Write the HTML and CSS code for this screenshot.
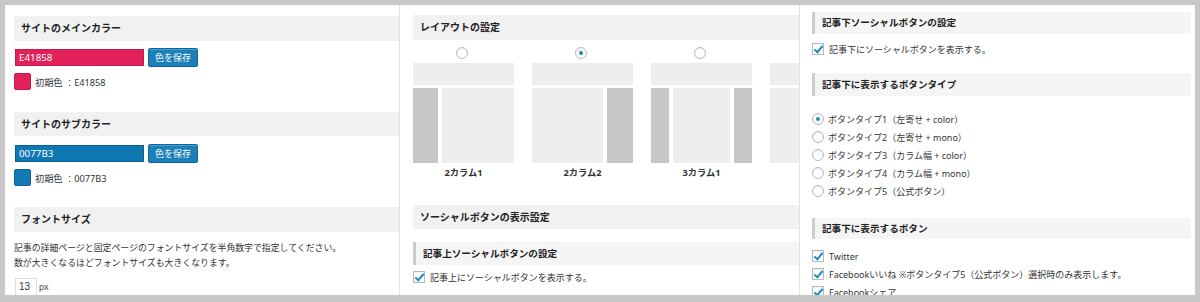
FILE: index.html
```html
<!DOCTYPE html>
<html lang="ja">
<head>
<meta charset="utf-8">
<title>設定</title>
<link rel="stylesheet" href="styles.css">
</head>
<body>
<div class="frame">
  <section class="panel p1">
    <h2 class="sec">サイトのメインカラー</h2>
    <div class="color-row">
      <div class="color-input pink">E41858</div>
      <button class="btn">色を保存</button>
    </div>
    <div class="default-row">
      <span class="swatch pink"></span>
      <span class="default-text">初期色 ：E41858</span>
    </div>

    <h2 class="sec sec-2">サイトのサブカラー</h2>
    <div class="color-row color-row-2">
      <div class="color-input blue">0077B3</div>
      <button class="btn">色を保存</button>
    </div>
    <div class="default-row">
      <span class="swatch blue"></span>
      <span class="default-text">初期色 ：0077B3</span>
    </div>

    <h2 class="sec sec-3">フォントサイズ</h2>
    <p class="desc">記事の詳細ページと固定ページのフォントサイズを半角数字で指定してください。<br>数が大きくなるほどフォントサイズも大きくなります。</p>
    <div class="size-row">
      <span class="num-input">13</span>
      <span class="unit">px</span>
    </div>
  </section>

  <section class="panel p2">
    <h2 class="sec">レイアウトの設定</h2>
    <div class="layouts">
      <div class="layout">
        <span class="radio"></span>
        <div class="thumb">
          <div class="t-top"></div>
          <div class="t-body">
            <div class="t-side w25"></div>
            <div class="t-main"></div>
          </div>
        </div>
        <div class="t-label">2カラム1</div>
      </div>
      <div class="layout">
        <span class="radio checked"></span>
        <div class="thumb">
          <div class="t-top"></div>
          <div class="t-body">
            <div class="t-main"></div>
            <div class="t-side w26"></div>
          </div>
        </div>
        <div class="t-label">2カラム2</div>
      </div>
      <div class="layout">
        <span class="radio"></span>
        <div class="thumb">
          <div class="t-top"></div>
          <div class="t-body">
            <div class="t-side w18"></div>
            <div class="t-main"></div>
            <div class="t-side w18"></div>
          </div>
        </div>
        <div class="t-label">3カラム1</div>
      </div>
      <div class="layout">
        <span class="radio"></span>
        <div class="thumb">
          <div class="t-top"></div>
          <div class="t-body">
            <div class="t-main"></div>
          </div>
        </div>
        <div class="t-label"></div>
      </div>
    </div>

    <h2 class="sec sec-social">ソーシャルボタンの表示設定</h2>
    <h3 class="sub sub-top">記事上ソーシャルボタンの設定</h3>
    <label class="opt opt-top"><span class="check"></span>記事上にソーシャルボタンを表示する。</label>
  </section>

  <section class="panel p3">
    <h3 class="sub">記事下ソーシャルボタンの設定</h3>
    <label class="opt opt-first"><span class="check"></span>記事下にソーシャルボタンを表示する。</label>

    <h3 class="sub sub-type">記事下に表示するボタンタイプ</h3>
    <div class="radios">
      <label class="opt"><span class="radio checked"></span>ボタンタイプ1（左寄せ + color）</label>
      <label class="opt"><span class="radio"></span>ボタンタイプ2（左寄せ + mono）</label>
      <label class="opt"><span class="radio"></span>ボタンタイプ3（カラム幅 + color）</label>
      <label class="opt"><span class="radio"></span>ボタンタイプ4（カラム幅 + mono）</label>
      <label class="opt"><span class="radio"></span>ボタンタイプ5（公式ボタン）</label>
    </div>

    <h3 class="sub sub-btn">記事下に表示するボタン</h3>
    <div class="checks">
      <label class="opt"><span class="check"></span>Twitter</label>
      <label class="opt"><span class="check"></span>Facebookいいね ※ボタンタイプ5（公式ボタン）選択時のみ表示します。</label>
      <label class="opt"><span class="check"></span>Facebookシェア</label>
    </div>
  </section>
</div>
</body>
</html>
```
FILE: styles.css
```css
* { box-sizing: border-box; }
html, body { margin: 0; padding: 0; }
body {
  background: #c8c8c8;
  font-family: "Noto Sans", "Noto Sans CJK JP", sans-serif;
  color: #333;
  font-size: 8.9px;
  width: 1200px;
  height: 302px;
  overflow: hidden;
}
.frame {
  margin: 5px 0 0 5px;
  width: 1190px;
  height: 290px;
  display: flex;
  gap: 1px;
  background: #e2e2e2;
  overflow: hidden;
}
.panel {
  background: #fff;
  height: 290px;
  overflow: hidden;
  flex: none;
}
.p1 { width: 394px; padding: 11px 0 0 9px; }
.p2 { width: 399px; padding: 10px 0 0 13px; }
.p3 { width: 395px; padding: 7px 4px 0 12px; }

.sec {
  margin: 0;
  height: 25px;
  line-height: 25px;
  background: #f1f1f1;
  font-size: 10px;
  font-weight: bold;
  color: #222;
  padding-left: 7px;
}
.sec-2 { margin-top: 22px; height: 24px; line-height: 24px; }
.sec-3 { margin-top: 21px; }

.color-row {
  display: flex;
  align-items: center;
  gap: 4px;
  margin-top: 7px;
  height: 19px;
}
.color-row-2 { margin-top: 8px; }
.color-input {
  width: 129px;
  height: 17px;
  margin-left: 1px;
  color: #fff;
  font-size: 9.8px;
  padding-left: 3px;
  line-height: 15px;
}
.color-input.pink { background: #e2215b; border: 1px solid #c8184d; }
.color-input.blue { background: #0f78b3; border: 1px solid #0a5f8e; }
.btn {
  height: 19px;
  padding: 0 6px;
  background: #1b80b8;
  border: 1px solid #0f6596;
  border-radius: 2px;
  color: #fff;
  font-family: inherit;
  font-size: 9px;
  line-height: 17px;
  box-shadow: inset 0 1px 0 #4aa0d0;
}
.default-row {
  display: flex;
  align-items: center;
  gap: 4px;
  margin-top: 6px;
  height: 17px;
}
.swatch {
  width: 17px;
  height: 17px;
  border-radius: 2px;
  display: block;
}
.swatch.pink { background: #e2215b; border: 1px solid #c8184d; }
.swatch.blue { background: #1479b4; border: 1px solid #0d6396; }
.default-text { color: #333; font-size: 9.2px; }

.desc {
  margin: 8px 0 0 0;
  line-height: 15px;
  font-size: 8.9px;
  color: #333;
}
.size-row {
  display: flex;
  align-items: center;
  gap: 2px;
  margin-top: 8px;
  margin-left: 1px;
}
.num-input {
  width: 22px;
  height: 18px;
  border: 1px solid #ddd;
  background: #fff;
  font-family: "Liberation Sans", sans-serif;
  font-size: 10px;
  line-height: 16px;
  padding-left: 3px;
  color: #333;
}
.unit { font-family: "Liberation Sans", sans-serif; font-size: 9px; color: #444; }

/* layouts */
.layouts {
  display: flex;
  gap: 18px;
  margin-top: 7px;
}
.layout {
  width: 101px;
  flex: none;
  display: flex;
  flex-direction: column;
  align-items: center;
}
.layout .radio { margin-left: -3px; }
.thumb {
  width: 101px;
  margin-top: 4px;
}
.t-top { height: 22px; background: #eeeeee; }
.t-body {
  display: flex;
  gap: 4px;
  height: 75px;
  margin-top: 3px;
}
.t-main { flex: 1; background: #eeeeee; }
.t-side { background: #c7c7c7; flex: none; }
.w25 { width: 25px; }
.w26 { width: 26px; }
.w18 { width: 18px; }
.t-label {
  margin-top: 4px;
  height: 12px;
  line-height: 12px;
  font-size: 9.2px;
  font-weight: bold;
  color: #333;
}
.sec-social { margin-top: 26px; height: 24px; line-height: 24px; }

.sub {
  margin: 0;
  height: 22px;
  line-height: 22px;
  background: #f5f5f5;
  border-left: 3px solid #cccccc;
  padding-left: 7px;
  font-size: 9.6px;
  font-weight: bold;
  color: #222;
}
.sub-top { margin-top: 13px; height: 23px; line-height: 23px; }
.opt {
  display: flex;
  align-items: center;
  gap: 5px;
  height: 18px;
  font-size: 9px;
  color: #333;
}
.opt-top { margin-top: 3px; }
.opt-first { margin-top: 6px; }
.sub-type { margin-top: 15px; height: 23px; line-height: 23px; }
.radios { margin-top: 14px; }
.radios .opt { gap: 4px; }
.sub-btn { margin-top: 18px; height: 21px; line-height: 21px; }
.checks { margin-top: 8px; }

.radio {
  width: 12px;
  height: 12px;
  border-radius: 50%;
  border: 1px solid #b4b9be;
  background: #fff;
  display: flex;
  align-items: center;
  justify-content: center;
  flex: none;
  box-shadow: inset 0 1px 2px rgba(0,0,0,0.07);
}
.radio.checked::after {
  content: "";
  width: 4px;
  height: 4px;
  border-radius: 50%;
  background: #1e8cbe;
}
.check {
  width: 12px;
  height: 12px;
  border: 1px solid #b4b9be;
  background: #fff;
  position: relative;
  flex: none;
  box-shadow: inset 0 1px 2px rgba(0,0,0,0.07);
}
.check::after {
  content: "";
  position: absolute;
  left: 3px;
  top: 0px;
  width: 3px;
  height: 7px;
  border: solid #1e8cbe;
  border-width: 0 2px 2px 0;
  transform: rotate(40deg);
}
```
